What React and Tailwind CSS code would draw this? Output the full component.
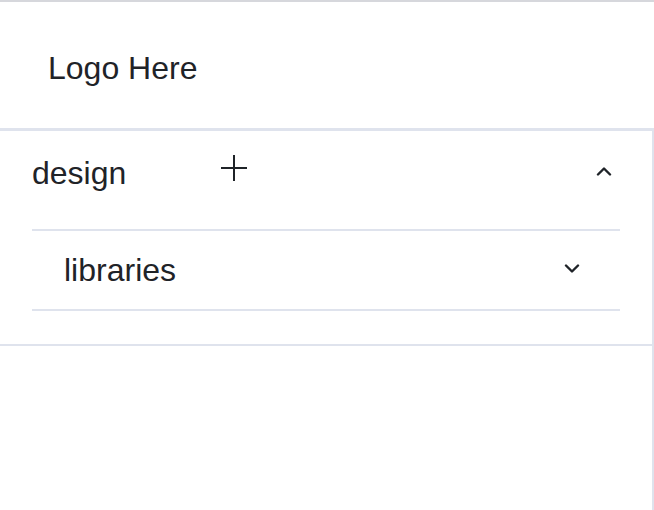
import React from "react";

function Plus() {
  return (
    <svg width="26" height="26" viewBox="0 0 26 26" fill="none" stroke="#1f2328" strokeWidth="2">
      <path d="M13 0v26M0 13h26" />
    </svg>
  );
}

function Chevron({ up }) {
  return (
    <svg width="16" height="10" viewBox="0 0 16 10" fill="none" stroke="#1f2328" strokeWidth="2.4" strokeLinecap="round" strokeLinejoin="round">
      {up ? <path d="M2 8.5L8 2.5l6 6" /> : <path d="M2 1.5l6 6 6-6" />}
    </svg>
  );
}

export default function App() {
  return (
    <div
      className="w-[654px] h-[510px] bg-white text-[#1f2328] overflow-hidden flex flex-col border-t-2 border-[#d6d7dc]"
      style={{ fontFamily: '"Liberation Sans", Arial, sans-serif' }}
    >
      <header className="h-[126px] shrink-0 flex items-center pl-[48px] pt-[5px]">
        <span className="text-[32px] leading-none">Logo Here</span>
      </header>
      <div className="flex-1 flex flex-col border-t-[3px] border-r-2 border-[#dfe3ed]">
        <div className="border-b-2 border-[#dfe3ed] pl-[32px] pr-[32px] pb-[33px]">
          <div className="h-[84px] flex items-center">
            <span className="text-[32px] leading-none">design</span>
            <span className="ml-[95px] -mt-[10px] flex"><Plus /></span>
            <span className="ml-auto mr-[8px] -mt-[4px] flex"><Chevron up /></span>
          </div>
          <div className="mt-[14px] border-t-2 border-b-2 border-[#dfe3ed]">
            <div className="h-[78px] flex items-center pl-[32px] pr-[40px]">
              <span className="text-[32px] leading-none">libraries</span>
              <span className="ml-auto -mt-[2px] flex"><Chevron /></span>
            </div>
          </div>
        </div>
        <div className="flex-1" />
      </div>
    </div>
  );
}
